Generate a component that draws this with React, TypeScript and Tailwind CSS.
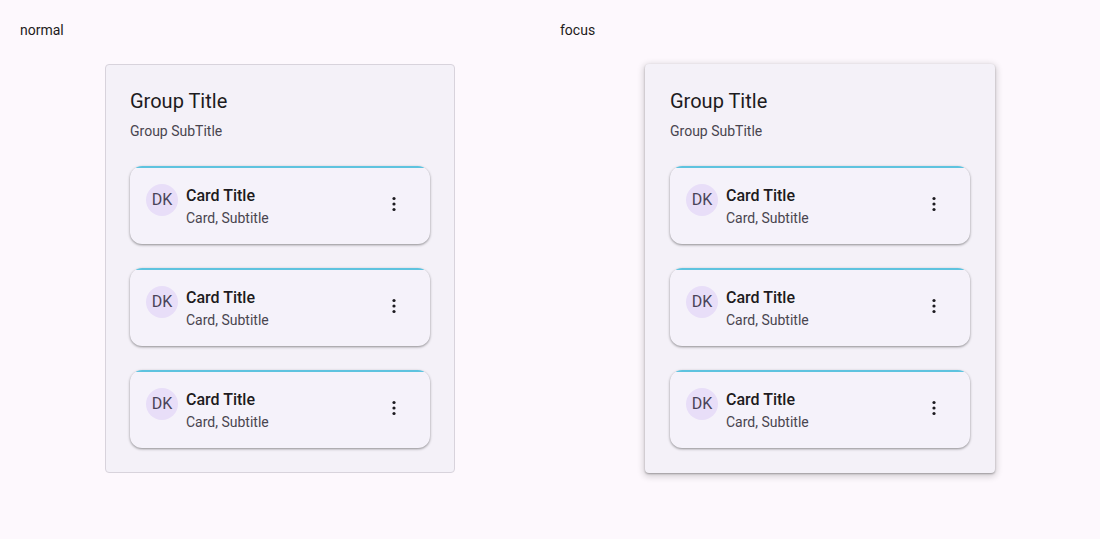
import React from "react";

const font = { fontFamily: "Roboto, 'Noto Sans', sans-serif" };

// ** Single card row ** \\
const Card = () => (
    <div className="flex flex-col rounded-xl overflow-hidden bg-[#f5f2fa] shadow-[0_1px_3px_rgba(0,0,0,0.3),0_1px_2px_rgba(0,0,0,0.15)]">
        {/* top accent line */}
        <div className="h-[2px] mx-[6px] bg-[#5ec3df]" />
        <div className="flex items-start gap-2 p-4">
            <div className="w-8 h-8 rounded-full bg-[#e8def8] flex items-center justify-center text-[16px] text-[#4a4458] shrink-0">
                DK
            </div>
            <div className="flex-1 flex flex-col">
                <span className="text-[16px] leading-6 font-medium text-[#1d1b20]">Card Title</span>
                <span className="text-[14px] leading-5 text-[#49454f]">Card, Subtitle</span>
            </div>
            <button className="w-10 h-10 flex items-center justify-center">
                <svg width="24" height="24" viewBox="0 0 24 24" fill="#1d1b20">
                    <circle cx="12" cy="6.5" r="1.6" />
                    <circle cx="12" cy="12" r="1.6" />
                    <circle cx="12" cy="17.5" r="1.6" />
                </svg>
            </button>
        </div>
    </div>
);

const Group = ({ focus }: { focus?: boolean }) => (
    <div
        className={
            "w-[350px] rounded bg-[#f4f1f8] p-6 border " +
            (focus
                ? "border-transparent shadow-[0_2px_6px_2px_rgba(0,0,0,0.15),0_1px_2px_rgba(0,0,0,0.3)]"
                : "border-[#d8d3dc]")
        }
    >
        <div className="text-[20px] leading-6 text-[#1d1b20]">Group Title</div>
        <div className="mt-2 text-[14px] leading-5 text-[#49454f]">Group SubTitle</div>
        <div className="mt-[25px] flex flex-col gap-6">
            <Card />
            <Card />
            <Card />
        </div>
    </div>
);

export default function App() {
    return (
        <div className="w-[1100px] h-[539px] bg-[#fdf8fd] flex" style={font}>
            {["normal", "focus"].map((label) => (
                <div key={label} className="w-[540px] pl-5 pt-5 flex flex-col">
                    <div className="text-[14px] leading-5 text-[#1d1b20]">{label}</div>
                    <div className="mt-[24px] flex justify-center">
                        <Group focus={label === "focus"} />
                    </div>
                </div>
            ))}
        </div>
    );
}
